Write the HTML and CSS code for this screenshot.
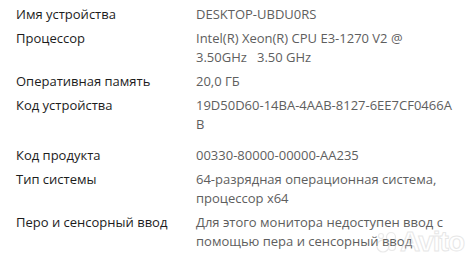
FILE: index.html
```html
<!DOCTYPE html>
<html lang="ru">
<head>
<meta charset="utf-8">
<link rel="stylesheet" href="styles.css">
</head>
<body>
<div class="specs">
  <div class="row"><div class="label">Имя устройства</div><div class="value">DESKTOP-UBDU0RS</div></div>
  <div class="row"><div class="label">Процессор</div><div class="value">Intel(R) Xeon(R) CPU E3-1270 V2 @<br>3.50GHz&nbsp;&nbsp; 3.50 GHz</div></div>
  <div class="row"><div class="label">Оперативная память</div><div class="value">20,0 ГБ</div></div>
  <div class="row row-tall"><div class="label">Код устройства</div><div class="value value-id">19D50D60-14BA-4AAB-8127-6EE7CF0466AB</div></div>
  <div class="row"><div class="label">Код продукта</div><div class="value">00330-80000-00000-AA235</div></div>
  <div class="row"><div class="label">Тип системы</div><div class="value">64-разрядная операционная система, процессор x64</div></div>
  <div class="row"><div class="label">Перо и сенсорный ввод</div><div class="value">Для этого монитора недоступен ввод с помощью пера и сенсорный ввод</div></div>
</div>
<div class="watermark">
  <svg class="wm-dots" width="22" height="22" viewBox="0 0 22 22">
    <circle cx="7" cy="15" r="6" />
    <circle cx="16" cy="16" r="3.5" />
    <circle cx="15" cy="6" r="4.5" />
    <circle cx="5" cy="5" r="2.5" />
  </svg>
  <span class="wm-text">Avito</span>
</div>
</body>
</html>
```
FILE: styles.css
```css
html, body {
  margin: 0;
  padding: 0;
  background: #ffffff;
}
body {
  width: 472px;
  height: 264px;
  overflow: hidden;
  position: relative;
  font-family: "Open Sans", "Noto Sans", sans-serif;
  font-size: 13px;
  line-height: 19px;
}
.specs {
  display: flex;
  flex-direction: column;
  padding: 5px 0 0 16px;
}
.row {
  display: grid;
  grid-template-columns: 180px 264px;
  padding-bottom: 5px;
}
.row-tall {
  padding-bottom: 12px;
}
.label {
  color: #1c1c1c;
}
.value {
  color: #5e5e5e;
}
.value-id {
  word-break: break-all;
}
.watermark {
  position: absolute;
  right: 8px;
  bottom: 8px;
  display: flex;
  align-items: center;
  gap: 2px;
  opacity: 0.3;
  pointer-events: none;
}
.wm-dots circle {
  fill: none;
  stroke: #b8b8b8;
  stroke-width: 1.2;
}
.wm-text {
  font-family: "Liberation Sans", sans-serif;
  font-size: 28px;
  line-height: 28px;
  font-weight: bold;
  color: #ffffff;
  -webkit-text-stroke: 1px #b0b0b0;
  letter-spacing: -1px;
}
```
